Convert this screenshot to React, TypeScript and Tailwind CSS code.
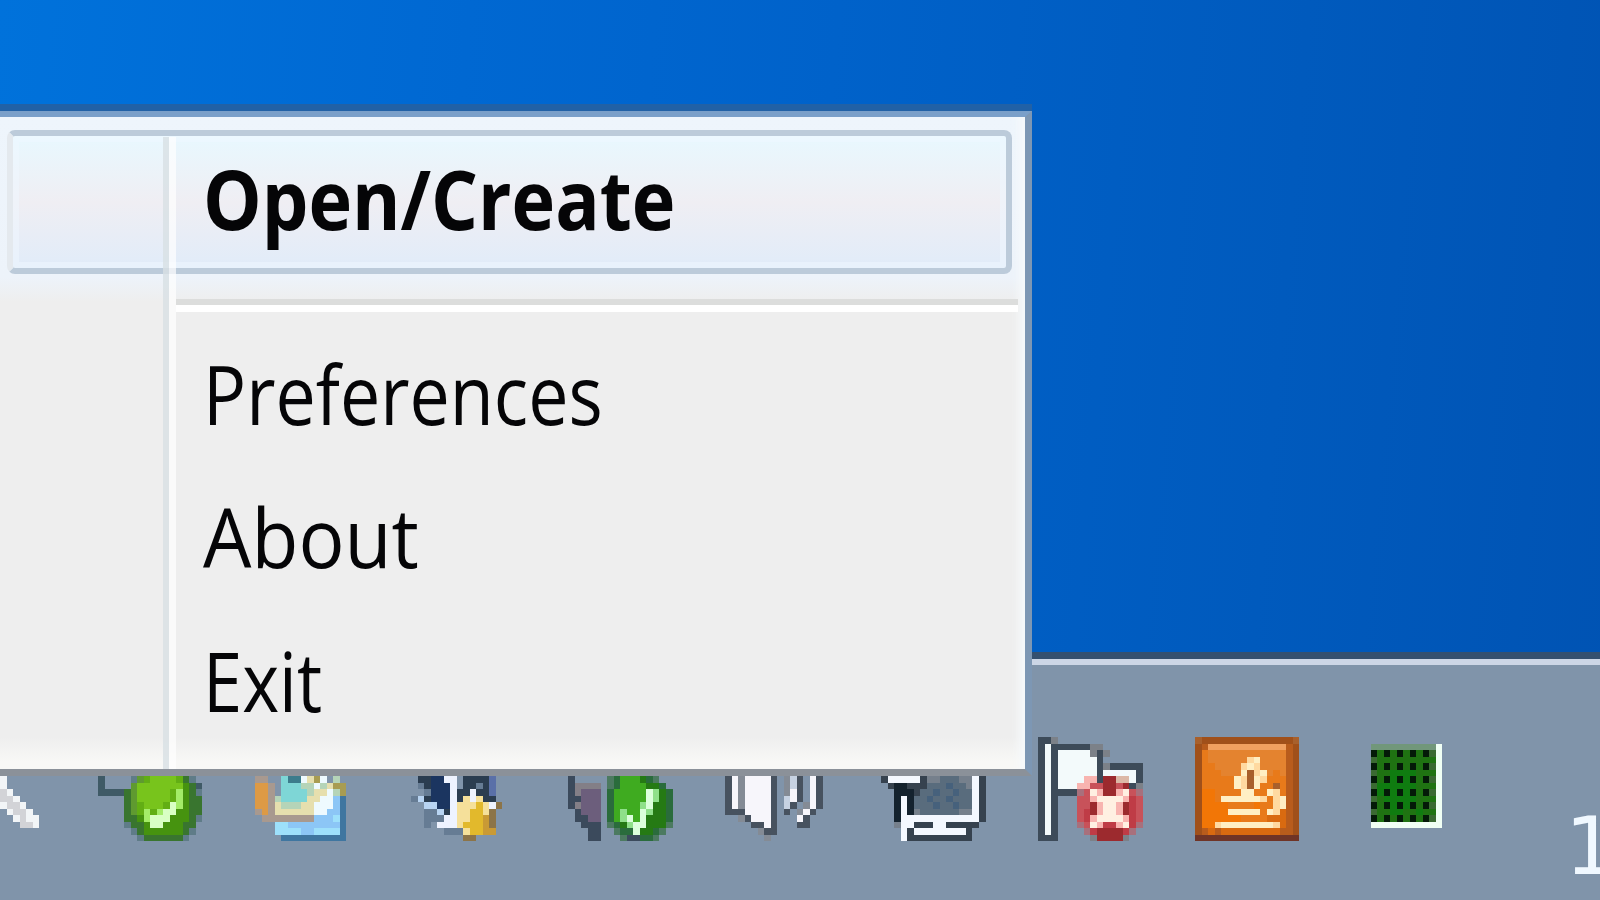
import clsx from "clsx";

type Sprite = { name: string; top?: number; rows: string[]; palette: Record<string, string> };

// Tray icons are drawn on a 16x16 grid, "top" is the first visible row.
const trayIcons: Sprite[] = [
  {
    name: "Safely remove",
    top: 6,
    palette: { d: "#3f5a66", f: "#5f7c88", e: "#39752f", g: "#5f9a30", b: "#78c41c", B: "#62ae14", m: "#46930f", l: "#a4ec68", w: "#d9ffc4" },
    rows: [
      "d....fgBbbbbBef.",
      "d....gbbbbbbbmed",
      "ddddegbbbbbBlmef",
      "....egbbbbbBlmee",
      "....egBbbbBwlmee",
      "....egBlBlwwmmee",
      "....eemlwwwmmmef",
      "....feemwwmmmee.",
      ".....femmmmmmef.",
      "......feeeeeef..",
    ],
  },
  {
    name: "Display",
    top: 6,
    palette: {
      o: "#dd9a45", p: "#a8998f", t: "#7ed6d6", T: "#3c7c8c", y: "#e6dfae", w: "#eefaff",
      c: "#8cc6f6", C: "#9de0fb", s: "#3f76a0", k: "#a89c52", q: "#b5d4b8",
    },
    rows: [
      "pp..tTTwykw.q...",
      "oop.tttqqwqykk..",
      "oop.ttttqyywqk..",
      "oopqttttyywwcs..",
      "oopyqqqyywwwcs..",
      "popyyyyyywwccs..",
      ".ppppppppcccCs..",
      "...CCccccccccs..",
      "...CCCCccCCCCs..",
      "....ssssssssss..",
    ],
  },
  {
    name: "Updater",
    top: 6,
    palette: { k: "#2b3d50", n: "#1b3560", g: "#667c94", a: "#b8d4f2", w: "#eef3ff", i: "#5a70a8", y: "#f5e09a", Y: "#e2b92c", b: "#8c7448", o: "#c99a35" },
    rows: [
      ".kknnww.kkkki...",
      ".gknnnw.kkgki...",
      "..gnnnwkkwkki...",
      "gaknnnwkywykk...",
      "..aannwyyyYywb..",
      "..ggakwyyYYyb...",
      "..gggwwyyYYob...",
      "..g.wwwyYYYob...",
      ".....gggyYYoo...",
      "........bb......",
    ],
  },
  {
    name: "Security check",
    top: 6,
    palette: { k: "#3b4a5c", p: "#6c5e7c", t: "#837f87", e: "#2a6c3c", f: "#4c7a60", g: "#3fab20", m: "#257a14", l: "#8fe08a", w: "#dcffdc" },
    rows: [
      "k.....fegggmef..",
      "ktttt.feggggmme.",
      "ktppp.egggggwlme",
      "kkppp.egggggwlme",
      "ktppp.egggglwmme",
      ".kppp.eglggwlmme",
      ".kkpp.eglwgwmmme",
      "..kkk.femlwwmmmf",
      "...kk..feewmmef.",
      "...kk...fkkeef..",
    ],
  },
  {
    name: "Volume",
    top: 6,
    palette: { k: "#47525f", w: "#f7f6fb", g: "#848b95", a: "#c6d2e2" },
    rows: [
      "kwgwwwwk.gak.wk.",
      "kwgwwwwk.gak.wk.",
      "kwgwwwwk.gwk.wk.",
      "kwgwwwwk.awk.wk.",
      "kwgwwwwk.ak.gwk.",
      "kkkwwwwk.k.gwk..",
      "..gkwwwk...wk...",
      "....kkwk...kk...",
      ".....gkk........",
      "......g.........",
    ],
  },
  {
    name: "Network",
    top: 6,
    palette: { k: "#36424f", d: "#14222e", w: "#f4f8ff", s: "#596c7d", S: "#46617c", g: "#76808c" },
    rows: [
      "kwwwwwkggsssggwk",
      ".kddkkksssSssgwk",
      "..dddkssSssSsswk",
      "..dwdssSssSssswk",
      "..dwdsssSssSsswk",
      "..dwdgssssssggwk",
      "..dwwwwwwwwwwwwk",
      "..gwwkkkwwkkkkk.",
      "...wkwwwwwwwwk..",
      "...wkkkkkkkkkk..",
    ],
  },
  {
    name: "Action Center",
    palette: { k: "#3d4b59", w: "#f3fafb", g: "#7c8188", r: "#c8525a", R: "#bf3c46", D: "#9c2a2e", p: "#f8b4b0", c: "#fff0e2", t: "#dcb8a6", a: "#a8707c" },
    rows: [
      "kkg.............",
      "kwkkkkkkgg......",
      "kwkwwwwwgkg.....",
      "kwkwwwwwwk......",
      "kwkwwwwwwkgkkkkk",
      "kwkwwwwwwkwwwwwk",
      "kwkwwwwppkDDttwk",
      "kwkwwwpprrDDrDkg",
      "kwkkkkarcpDDpcra",
      "kwk...rrpccccpRr",
      "kwk...rrDpccpDRr",
      "kwk...rRDpccpDRr",
      "kwk...rRpccccpRr",
      "kwk...arcpRRpcRa",
      "kwk....aRDDDDRa.",
      "kkk.....gDDDDg..",
    ],
  },
  {
    name: "Java",
    palette: { B: "#6f3426", b: "#a0501a", d: "#b85c1c", h: "#f0a060", m: "#e4832f", o: "#e87a1a", s: "#f27606", n: "#d96a10", c: "#ffefc4", l: "#ffd9a0", x: "#a8602c" },
    rows: [
      "xbbbbbbbbbbbbbbx",
      "bdhhhhhhhhhhhhdb",
      "bommmmmmmmmmmmdb",
      "bommmmmmlcmmmmdb",
      "boommmmlclmmmmdb",
      "booommmcxlcmomdb",
      "boooooclxclooodb",
      "boooooclxcooxodb",
      "bssooooccooclodb",
      "bssocccccclolcdb",
      "bssssoooosoolcdb",
      "bsssscccccoclndb",
      "bssssssoooonnndb",
      "bsslcccccccclndb",
      "bdndnnnnnnnnnddb",
      "BBBBBBBBBBBBBBBB",
    ],
  },
  {
    name: "Activity",
    palette: { k: "#041a08", g: "#1f7312", G: "#0f7c10", e: "#3a6a32", f: "#71977a", w: "#f0fff4" },
    rows: [
      "................",
      "...ffffffffffw..",
      "...kgkgkgkgkew..",
      "...egggggggggw..",
      "...kgkgkgkgkew..",
      "...eggGGGGgggw..",
      "...kgkGkGkgkew..",
      "...eGGGGGGgggw..",
      "...kGkGkGkgkew..",
      "...egGGGGGgggw..",
      "...kgkGkGkgkew..",
      "...eggGGggGggw..",
      "...kgkgkgkgkew..",
      "...wwwwwwwwwww..",
    ],
  },
];

const overflowArrow: Sprite = {
  name: "Show hidden icons",
  top: 6,
  palette: { w: "#f2f5f7", g: "#d2d3d7" },
  rows: ["w.....", "w.....", "gw....", "ggw...", "wggw..", ".wggw.", "..wgww", "...ggw"],
};

function PixelIcon({ sprite, className, columns = 16 }: { sprite: Sprite; className: string; columns?: number }) {
  return (
    <svg viewBox={`0 0 ${columns} 16`} preserveAspectRatio="none" shapeRendering="crispEdges" className={className} aria-label={sprite.name}>
      {sprite.rows.flatMap((row, y) =>
        [...row].map((cell, x) =>
          cell === "." ? null : (
            <rect key={`${x}-${y}`} x={x} y={y + (sprite.top ?? 0)} width={1} height={1} fill={sprite.palette[cell]} />
          ),
        ),
      )}
    </svg>
  );
}

function MenuItem({ label, active, textClass }: { label: string; active?: boolean; textClass: string }) {
  return (
    <li
      className={clsx(
        "flex items-center",
        active
          ? "mr-[13px] ml-[7px] h-[144px] rounded-[8px] border-[6px] border-[#bccbda] border-l-[#e4e9ee] bg-linear-to-b from-[#e8f8ff] via-[#efeef3] to-[#e1ecf9] pb-[9px] pl-[190px] shadow-[inset_0_0_0_6px_rgba(240,248,255,0.5)]"
          : "h-[143.5px] pb-3 pl-[203px]",
      )}
    >
      <span className={clsx("origin-left text-[82px] leading-none whitespace-nowrap text-[#050507]", textClass)}>{label}</span>
    </li>
  );
}

export default function App() {
  return (
    <div className="relative flex h-[900px] w-[1600px] flex-col overflow-hidden bg-[linear-gradient(95deg,#0072db_0%,#0068d2_28%,#0062ca_50%,#005abd_78%,#0053b3_100%)] font-['Open_Sans','Noto_Sans',sans-serif]">
      <div className="flex-1" />

      <footer className="flex h-[248px] shrink-0 items-start border-t-[7px] border-[#35506f] bg-[#8094aa]">
        <div className="flex h-full w-full items-start border-t-[6px] border-[#ccd6e6] pt-[72px]">
          <PixelIcon sprite={overflowArrow} columns={6} className="mr-[58.8px] h-[104.4px] w-[39.2px] shrink-0" />
          <div className="flex gap-[52.2px]">
            {trayIcons.map((icon) => (
              <PixelIcon key={icon.name} sprite={icon} className="h-[104.4px] w-[104.5px] shrink-0" />
            ))}
          </div>
          <span className="mt-[69px] ml-[109px] font-['DejaVu_Sans',sans-serif] text-[81px] leading-none text-[#f0f8ff]">1</span>
        </div>
      </footer>

      <div className="absolute top-[104px] left-0 h-[672px] w-[1032px] border-t-[7px] border-[#2161a6]">
        <div className="h-full border-t-[6px] border-r-[7px] border-b-[7px] border-t-[#7a9fc9] border-r-[#7d97b4] border-b-[#8b9199]">
          <ul className="relative h-full bg-[linear-gradient(to_bottom,#eef5fc_0px,#edf3fa_160px,#eeeeee_185px,#eeeeee_620px,#f8f8f6_645px)] pt-[13px] shadow-[inset_-12px_0_8px_-6px_#f6f9fb]">
            <MenuItem label="Open/Create" active textClass="font-bold scale-x-[0.9]" />
            <li className="flex h-[53px] items-center pt-[12px] pl-[176px]">
              <hr className="mb-[2px] h-[13px] w-[842px] border-t-[6px] border-b-[7px] border-t-[#dcdddc] border-b-white" />
            </li>
            <MenuItem label="Preferences" textClass="scale-x-[0.875]" />
            <MenuItem label="About" textClass="scale-x-[0.935]" />
            <MenuItem label="Exit" textClass="scale-x-[0.86]" />
            <li className="pointer-events-none absolute top-[20px] bottom-0 left-[163px] w-[13px] border-r-[7px] border-l-[6px] border-r-white/70 border-l-[#d9e1e5]/80" />
          </ul>
        </div>
      </div>
    </div>
  );
}
